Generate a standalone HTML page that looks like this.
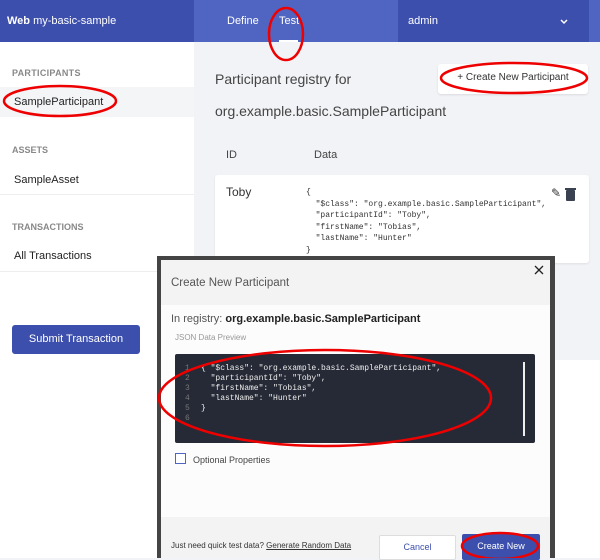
<!DOCTYPE html>
<html><head><meta charset="utf-8"><style>
*{box-sizing:border-box;margin:0;padding:0}
body{width:600px;height:558px;overflow:hidden;position:relative;background:#f2f3f7;font-family:"Liberation Sans",sans-serif;color:#222}
.a{position:absolute}
.mono{font-family:"Liberation Mono",monospace}
</style></head><body>
<div class="a" style="left:0;top:0;width:194px;height:42px;background:#3d4fad"></div>
<div class="a" style="left:194px;top:0;width:204px;height:42px;background:#5065c2"></div>
<div class="a" style="left:398px;top:0;width:191px;height:42px;background:#3d4fad"></div>
<div class="a" style="left:589px;top:0;width:11px;height:42px;background:#5065c2"></div>
<div class="a" style="left:7px;top:15px;font-size:11px;color:#fff"><b>Web</b> my-basic-sample</div>
<div class="a" style="left:227px;top:15px;font-size:11px;color:#fff">Define</div>
<div class="a" style="left:279px;top:15px;font-size:11px;color:#fff">Test</div>
<div class="a" style="left:279px;top:40px;width:19px;height:2px;background:#fff"></div>
<div class="a" style="left:408px;top:15px;font-size:11px;color:#fff">admin</div>
<svg class="a" style="left:560px;top:19px" width="8" height="6"><path d="M1 1L4 4L7 1" fill="none" stroke="#fff" stroke-width="1.5"/></svg>
<div class="a" style="left:0;top:42px;width:194px;height:516px;background:#fff"></div>
<div class="a" style="left:12px;top:68px;font-size:9px;font-weight:bold;color:#888;letter-spacing:.3px">PARTICIPANTS</div>
<div class="a" style="left:0;top:87px;width:194px;height:30px;background:#f4f5f7"></div>
<div class="a" style="left:14px;top:96px;font-size:11px;color:#222">SampleParticipant</div>
<div class="a" style="left:12px;top:145px;font-size:9px;font-weight:bold;color:#888">ASSETS</div>
<div class="a" style="left:14px;top:174px;font-size:11px">SampleAsset</div>
<div class="a" style="left:0;top:194px;width:194px;height:1px;background:#eee"></div>
<div class="a" style="left:12px;top:222px;font-size:9px;font-weight:bold;color:#888">TRANSACTIONS</div>
<div class="a" style="left:14px;top:250px;font-size:11px">All Transactions</div>
<div class="a" style="left:0;top:271px;width:194px;height:1px;background:#eee"></div>
<div class="a" style="left:12px;top:325px;width:128px;height:29px;background:#3d4fad;border-radius:3px;color:#fff;font-size:11px;text-align:center;line-height:29px">Submit Transaction</div>
<div class="a" style="left:215px;top:71px;font-size:14px;color:#444">Participant registry for</div>
<div class="a" style="left:215px;top:103px;font-size:14px;color:#444">org.example.basic.SampleParticipant</div>
<div class="a" style="left:438px;top:64px;width:150px;height:30px;background:#fff;border-radius:3px;box-shadow:0 1px 2px rgba(0,0,0,.1);font-size:10px;text-align:center;line-height:28px;color:#333">+ Create New Participant</div>
<div class="a" style="left:226px;top:149px;font-size:11px;color:#444">ID</div>
<div class="a" style="left:314px;top:149px;font-size:11px;color:#444">Data</div>
<div class="a" style="left:215px;top:175px;width:374px;height:88px;background:#fff;border-radius:3px;box-shadow:0 1px 2px rgba(0,0,0,.08)"></div>
<div class="a" style="left:226px;top:185px;font-size:12px;color:#333">Toby</div>
<pre class="a mono" style="left:306px;top:187px;font-size:8px;line-height:11.5px;color:#333">{
  "$class": "org.example.basic.SampleParticipant",
  "participantId": "Toby",
  "firstName": "Tobias",
  "lastName": "Hunter"
}</pre>
<div class="a" style="left:551px;top:186px;font-size:12px;color:#333">&#9998;</div>
<div class="a" style="left:566px;top:190px;width:9px;height:11px;background:#3a4252;border-radius:1px"></div>
<div class="a" style="left:565px;top:188px;width:11px;height:2px;background:#3a4252"></div>
<div class="a" style="left:555px;top:360px;width:45px;height:198px;background:#fff"></div>
<div class="a" style="left:157px;top:256px;width:398px;height:302px;background:#444"></div>
<div class="a" style="left:161px;top:260px;width:389px;height:298px;background:#fcfcfc"></div>
<div class="a" style="left:161px;top:260px;width:389px;height:45px;background:#f3f3f3"></div>
<div class="a" style="left:171px;top:277px;font-size:11.5px;color:#555">Create New Participant</div>
<svg class="a" style="left:534px;top:265px" width="10" height="10"><path d="M1 1L9 9M9 1L1 9" stroke="#222" stroke-width="1.3"/></svg>
<div class="a" style="left:171px;top:313px;font-size:11px;color:#555">In registry: <b style="color:#222">org.example.basic.SampleParticipant</b></div>
<div class="a" style="left:175px;top:333px;font-size:8px;color:#999">JSON Data Preview</div>
<div class="a" style="left:175px;top:354px;width:360px;height:89px;background:#262a36;border-radius:2px"></div>
<pre class="a mono" style="left:185px;top:364px;font-size:8px;line-height:10px;color:#777">1
2
3
4
5
6</pre>
<pre class="a mono" style="left:201px;top:364px;font-size:8px;line-height:10px;color:#eee">{ "$class": "org.example.basic.SampleParticipant",
  "participantId": "Toby",
  "firstName": "Tobias",
  "lastName": "Hunter"
}</pre>
<div class="a" style="left:523px;top:362px;width:2px;height:74px;background:#eee"></div>
<div class="a" style="left:175px;top:453px;width:11px;height:11px;border:1px solid #5065c2;background:#fff"></div>
<div class="a" style="left:193px;top:455px;font-size:9px;color:#444">Optional Properties</div>
<div class="a" style="left:161px;top:517px;width:389px;height:41px;background:#f3f3f3"></div>
<div class="a" style="left:171px;top:541px;font-size:8px;color:#333">Just need quick test data? <u>Generate Random Data</u></div>
<div class="a" style="left:379px;top:535px;width:77px;height:25px;background:#fff;border:1px solid #ddd;border-radius:2px;font-size:9px;color:#3d4fad;text-align:center;line-height:23px">Cancel</div>
<div class="a" style="left:462px;top:534px;width:78px;height:26px;background:#3d4fad;border-radius:2px;font-size:9px;color:#fff;text-align:center;line-height:24px">Create New</div>
<svg class="a" style="left:0;top:0" width="600" height="558">
<g fill="none" stroke="#e00" stroke-width="2.5">
<ellipse cx="286" cy="34" rx="17" ry="26"/>
<ellipse cx="60" cy="101" rx="56" ry="15"/>
<ellipse cx="514" cy="78" rx="73" ry="15"/>
<ellipse cx="325" cy="398" rx="166" ry="48"/>
<ellipse cx="500" cy="546" rx="38" ry="13"/>
</g></svg>
</body></html>
